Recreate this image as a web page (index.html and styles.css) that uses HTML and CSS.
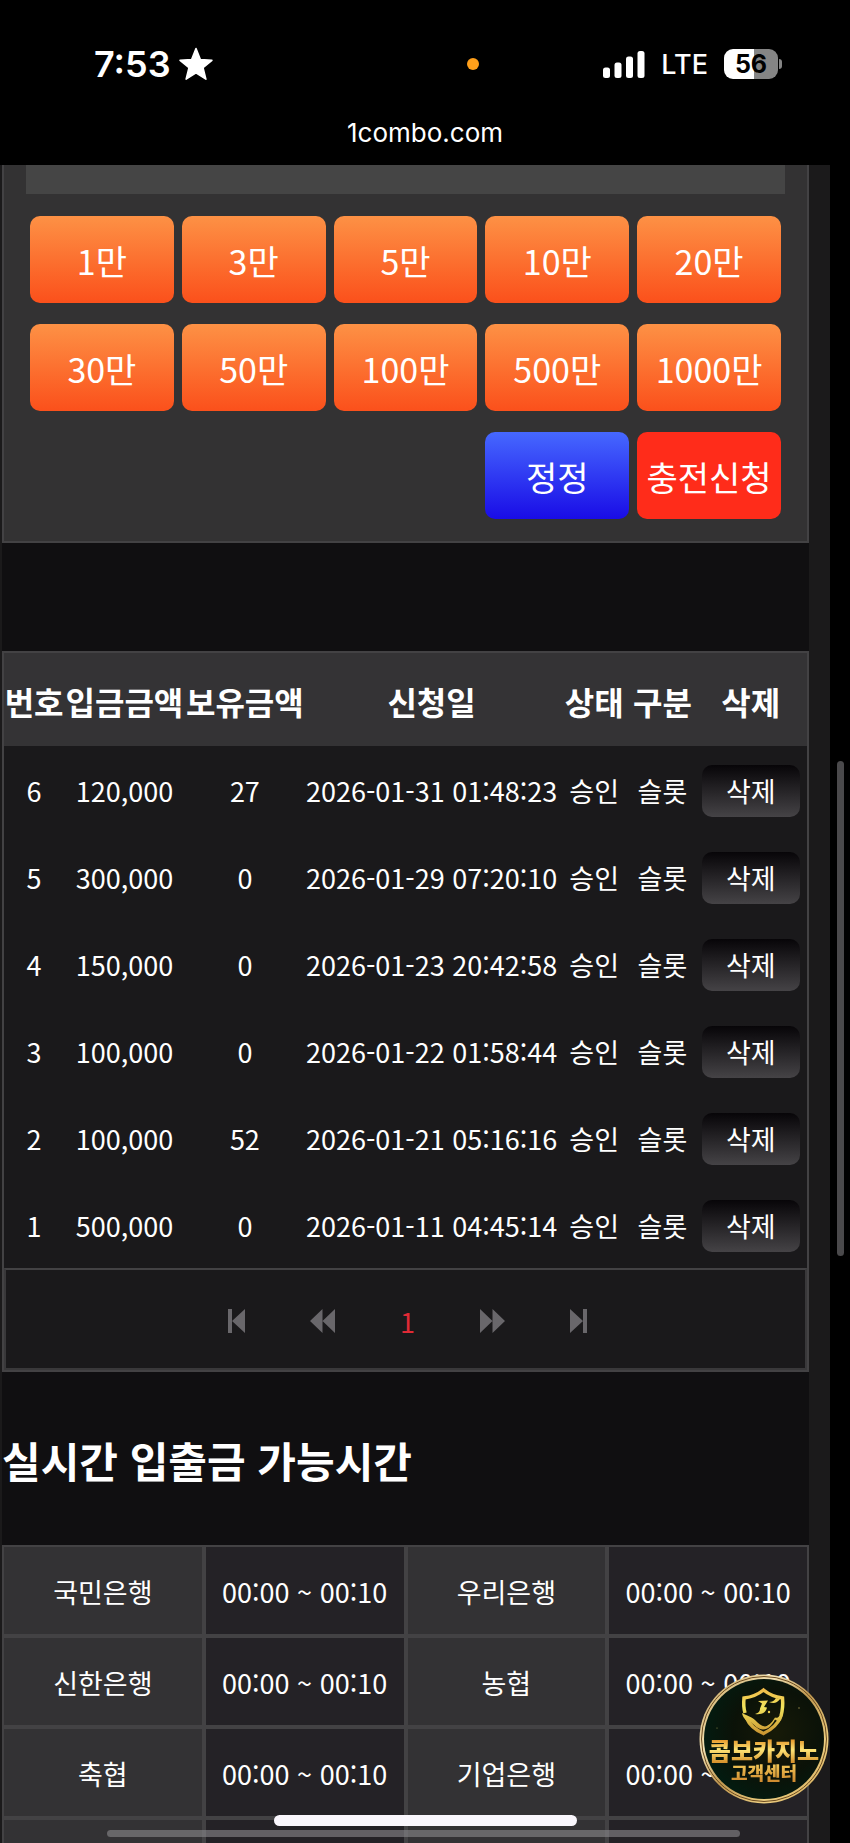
FILE: index.html
```html
<!DOCTYPE html>
<html lang="ko">
<head>
    <meta charset="UTF-8">
    <meta name="viewport" content="width=device-width, initial-scale=1.0">
    <title>1combo.com</title>
    <link rel="stylesheet" href="styles.css">
</head>
<body>
    <header class="phone-header">
        <div class="status-bar">
            <div class="status-time">
                <span>7:53</span>
                <svg class="star" viewBox="0 0 32 32" aria-hidden="true">
                    <path d="M16 1.5l4.1 10.2 10.9.8-8.4 7 2.7 10.8L16 24.4l-9.3 5.9 2.7-10.8-8.4-7 10.9-.8z" fill="#fff" stroke="#fff" stroke-width="1.5" stroke-linejoin="round"/>
                </svg>
            </div>
            <span class="mic-dot"></span>
            <div class="status-icons">
                <svg class="signal" viewBox="0 0 42 27" aria-hidden="true">
                    <rect x="0" y="16.500" width="7" height="10.500" rx="2.5" fill="#fff"/>
                    <rect x="11.5" y="11.500" width="7" height="15.500" rx="2.5" fill="#fff"/>
                    <rect x="23" y="5.500" width="7" height="21.500" rx="2.5" fill="#fff"/>
                    <rect x="34.5" y="0" width="7" height="27" rx="2.5" fill="#fff"/>
                </svg>
                <span class="network">LTE</span>
                <div class="battery"><span class="battery-level">56</span></div>
            </div>
        </div>
        <div class="address">1combo.com</div>
    </header>

    <main class="page">
        <div class="container">
            <form class="charge-panel">
                <input class="amount-input" type="text" aria-label="충전금액">
                <div class="amount-buttons">
                    <button type="button" class="btn">1만</button>
                    <button type="button" class="btn">3만</button>
                    <button type="button" class="btn">5만</button>
                    <button type="button" class="btn">10만</button>
                    <button type="button" class="btn">20만</button>
                    <button type="button" class="btn">30만</button>
                    <button type="button" class="btn">50만</button>
                    <button type="button" class="btn">100만</button>
                    <button type="button" class="btn">500만</button>
                    <button type="button" class="btn">1000만</button>
                    <button type="reset" class="btn btn-reset">정정</button>
                    <button type="submit" class="btn btn-submit">충전신청</button>
                </div>
            </form>

            <section class="history">
                <table class="history-table">
                    <colgroup>
                        <col class="col-no">
                        <col class="col-money">
                        <col class="col-money">
                        <col class="col-date">
                        <col class="col-state">
                        <col class="col-kind">
                        <col class="col-delete">
                    </colgroup>
                    <thead>
                        <tr><th>번호</th><th>입금금액</th><th>보유금액</th><th>신청일</th><th>상태</th><th>구분</th><th>삭제</th></tr>
                    </thead>
                    <tbody>
                        <tr><td>6</td><td>120,000</td><td>27</td><td>2026-01-31 01:48:23</td><td>승인</td><td>슬롯</td><td><button type="button" class="btn-delete">삭제</button></td></tr>
                        <tr><td>5</td><td>300,000</td><td>0</td><td>2026-01-29 07:20:10</td><td>승인</td><td>슬롯</td><td><button type="button" class="btn-delete">삭제</button></td></tr>
                        <tr><td>4</td><td>150,000</td><td>0</td><td>2026-01-23 20:42:58</td><td>승인</td><td>슬롯</td><td><button type="button" class="btn-delete">삭제</button></td></tr>
                        <tr><td>3</td><td>100,000</td><td>0</td><td>2026-01-22 01:58:44</td><td>승인</td><td>슬롯</td><td><button type="button" class="btn-delete">삭제</button></td></tr>
                        <tr><td>2</td><td>100,000</td><td>52</td><td>2026-01-21 05:16:16</td><td>승인</td><td>슬롯</td><td><button type="button" class="btn-delete">삭제</button></td></tr>
                        <tr><td>1</td><td>500,000</td><td>0</td><td>2026-01-11 04:45:14</td><td>승인</td><td>슬롯</td><td><button type="button" class="btn-delete">삭제</button></td></tr>
                    </tbody>
                </table>
                <nav class="pager">
                    <a href="#" aria-label="처음">
                        <svg width="17" height="24" viewBox="0 0 17 24"><path d="M0 0h4v24H0zM17 0v24L4 12z"/></svg>
                    </a>
                    <a href="#" aria-label="이전">
                        <svg width="25" height="24" viewBox="0 0 25 24"><path d="M12.5 0v24L0 12zM25 0v24L12.5 12z"/></svg>
                    </a>
                    <a href="#" class="current">1</a>
                    <a href="#" aria-label="다음">
                        <svg width="25" height="24" viewBox="0 0 25 24"><path d="M0 0v24l12.5-12zM12.5 0v24L25 12z"/></svg>
                    </a>
                    <a href="#" aria-label="마지막">
                        <svg width="17" height="24" viewBox="0 0 17 24"><path d="M0 0v24l13-12zM13 0h4v24h-4z"/></svg>
                    </a>
                </nav>
            </section>

            <h2 class="section-title">실시간 입출금 가능시간</h2>

            <table class="bank-table">
                <tbody>
                    <tr><th>국민은행</th><td>00:00 ~ 00:10</td><th>우리은행</th><td>00:00 ~ 00:10</td></tr>
                    <tr><th>신한은행</th><td>00:00 ~ 00:10</td><th>농협</th><td>00:00 ~ 00:10</td></tr>
                    <tr><th>축협</th><td>00:00 ~ 00:10</td><th>기업은행</th><td>00:00 ~ 00:10</td></tr>
                    <tr><th></th><td></td><th></th><td></td></tr>
                </tbody>
            </table>
        </div>
    </main>

    <!-- customer center badge -->
    <a href="#" class="support-badge" aria-label="콤보카지노 고객센터">
        <svg viewBox="0 0 130 130">
            <defs>
                <linearGradient id="ring" x1="0" y1="0" x2="1" y2="1">
                    <stop offset="0" stop-color="#8a6a36"/>
                    <stop offset=".15" stop-color="#d8bd80"/>
                    <stop offset=".3" stop-color="#f3e2b4"/>
                    <stop offset=".5" stop-color="#c09850"/>
                    <stop offset=".75" stop-color="#edcf82"/>
                    <stop offset="1" stop-color="#c99c4a"/>
                </linearGradient>
                <radialGradient id="face" cx=".6" cy=".45" r=".6">
                    <stop offset="0" stop-color="#171a08"/>
                    <stop offset=".6" stop-color="#0b1208"/>
                    <stop offset="1" stop-color="#031b10"/>
                </radialGradient>
                <linearGradient id="gold" gradientUnits="userSpaceOnUse" x1="0" y1="14" x2="0" y2="62">
                    <stop offset="0" stop-color="#f0b848"/>
                    <stop offset=".4" stop-color="#f1e35c"/>
                    <stop offset="1" stop-color="#c78f2e"/>
                </linearGradient>
                <linearGradient id="name-gold" gradientUnits="userSpaceOnUse" x1="0" y1="66" x2="0" y2="88">
                    <stop offset="0" stop-color="#e59a2e"/>
                    <stop offset=".45" stop-color="#fde476"/>
                    <stop offset="1" stop-color="#d8942e"/>
                </linearGradient>
                <linearGradient id="label-gold" gradientUnits="userSpaceOnUse" x1="0" y1="91" x2="0" y2="107">
                    <stop offset="0" stop-color="#f0c455"/>
                    <stop offset="1" stop-color="#d08c30"/>
                </linearGradient>
            </defs>
            <circle cx="65" cy="65" r="64.5" fill="url(#ring)"/>
            <circle cx="65" cy="65" r="62.5" fill="none" stroke="#6b4b20" stroke-width="1"/>
            <circle cx="65" cy="65" r="60" fill="url(#face)"/>
            <!-- shield -->
            <path d="M46 39c-1.500-5-1.500-10-1-15 8-1 14-3.500 19.500-8 5.500 4.500 12 7 19 8 .5 6 .2 12-1.500 18-3 8-9 13.500-17.500 17.500-8-3.500-14-8.500-17-15.500" fill="none" stroke="url(#gold)" stroke-width="3.500"/>
            <path d="M43 39c5 3 9 3.500 13 7 3 3 6 6 10 6.500 5-1 8-6 10-9 3 1 5-1 8-5l-2 8c-3 1-5 0-6-1-3 6-7 10-12 10-5 0-8-4-12-7-4-1-8-4-9-9.500z" fill="url(#gold)"/>
            <path d="M59 27l10-.5-4 6.500 3 .5c-1 5-5 7.500-12 6.500 4-1 5-3 5-5.500l2-5z" fill="url(#gold)"/>
            <path d="M70 28c3 0 5-1 7-4l4 1c-3 4-6 5-11 3z" fill="url(#gold)"/>
            <circle cx="70" cy="38" r="1.2" fill="#e9cf50"/>
            <circle cx="100" cy="34" r=".7" fill="#a99a55"/>
            <circle cx="18" cy="54" r=".6" fill="#8f8a50"/>
            <text class="badge-name" x="65" y="86" text-anchor="middle">콤보카지노</text>
            <text class="badge-label" x="65" y="106" text-anchor="middle">고객센터</text>
        </svg>
    </a>

    <span class="scrollbar-y"></span>
    <span class="scrollbar-x"></span>
    <span class="home-indicator"></span>
</body>
</html>
```
FILE: styles.css
```css
* {
    box-sizing: border-box;
}
body {
    font-family: "Noto Sans CJK KR", "Noto Sans", sans-serif;
    margin: 0;
    height: 100vh;
    overflow: hidden;
    display: flex;
    flex-direction: column;
    background-color: #000000;
    color: #ffffff;
}
button, input {
    font-family: inherit;
    border: 0;
    margin: 0;
    padding: 0;
    color: #ffffff;
}
a {
    color: inherit;
    text-decoration: none;
}

/* phone status bar */
.phone-header {
    flex: none;
    height: 165px;
    padding-top: 40px;
    font-family: Inter, "Liberation Sans", sans-serif;
}
.status-bar {
    display: grid;
    grid-template-columns: 5fr 12px 4fr;
    align-items: center;
    height: 48px;
    padding: 0 72px 0 94px;
}
.status-time {
    display: flex;
    align-items: center;
    gap: 8px;
    font-size: 36px;
    font-weight: 600;
}
.star {
    width: 34px;
    height: 34px;
}
.mic-dot {
    width: 12px;
    height: 12px;
    border-radius: 50%;
    background-color: #ff9f1a;
}
.status-icons {
    display: flex;
    align-items: center;
    justify-content: flex-end;
    gap: 16px;
}
.signal {
    width: 42px;
    height: 27px;
}
.network {
    font-size: 27px;
    font-weight: 500;
}
.battery {
    position: relative;
    width: 54px;
    height: 30px;
    border-radius: 9px;
    background: linear-gradient(90deg, #ffffff 56%, #858585 56%);
    color: #000000;
    font-size: 25px;
    font-weight: 700;
    line-height: 30px;
    text-align: center;
}
.battery::after {
    content: "";
    position: absolute;
    right: -4px;
    top: 10px;
    width: 3px;
    height: 10px;
    border-radius: 0 3px 3px 0;
    background-color: #858585;
}
.address {
    margin-top: 29px;
    font-size: 26px;
    line-height: 32px;
    text-align: center;
}

/* page */
.page {
    flex: 1;
    min-height: 0;
    overflow: hidden;
    margin-right: 20px;
    padding: 0 21px 0 2px;
    background-color: #1b1a1b;
}
.container {
    background-color: #100f11;
}
.charge-panel {
    padding: 0 22px 22px;
    border: 2px solid #434244;
    border-top: 0;
    background-color: #333233;
}
.amount-input {
    display: block;
    width: 100%;
    height: 29px;
    background-color: #454545;
}
.amount-buttons {
    display: grid;
    grid-template-columns: repeat(5, minmax(0, 1fr));
    gap: 21px 8px;
    padding: 22px 4px 0;
}
.btn {
    height: 87px;
    padding-top: 2px;
    border-radius: 10px;
    background: linear-gradient(#fd9145, #fb501b);
    font-size: 34px;
    white-space: nowrap;
}
.btn-reset {
    grid-column: 4;
    background: linear-gradient(#4668ff, #190ce6);
}
.btn-submit {
    background: #ff2c1a;
}

/* deposit history */
.history {
    margin-top: 108px;
    border: 2px solid #434244;
    background-color: #1a191b;
}
.history-table {
    width: 100%;
    table-layout: fixed;
    border-collapse: collapse;
    text-align: center;
    white-space: nowrap;
}
.col-no { width: 7.5%; }
.col-money { width: 15%; }
.col-date { width: 31.5%; }
.col-state { width: 9%; }
.col-kind { width: 8%; }
.col-delete { width: 14%; }
.history-table th {
    height: 93px;
    padding: 2px 0 0;
    background-color: #343335;
    font-size: 32px;
    font-weight: 700;
}
.history-table td {
    height: 87px;
    padding: 2px 0 0;
    font-size: 27px;
}
.btn-delete {
    display: block;
    width: 98px;
    height: 52px;
    margin: 0 auto;
    border-radius: 10px;
    background: linear-gradient(#070508, #454346);
    font-size: 27px;
}
.pager {
    display: flex;
    align-items: center;
    justify-content: center;
    gap: 65px;
    height: 102px;
    padding: 4px 0 0 4px;
    border: 2px solid #39383a;
    border-top-color: #434244;
    font-size: 27px;
}
.pager svg {
    display: block;
    fill: #69676b;
}
.pager .current {
    color: #e02a36;
}

/* bank hours */
.section-title {
    margin: 58px 0 55px;
    font-size: 42px;
    font-weight: 700;
    line-height: 60px;
}
.bank-table {
    width: 100%;
    table-layout: fixed;
    border-spacing: 0;
    text-align: center;
    white-space: nowrap;
    font-size: 27px;
}
.bank-table th,
.bank-table td {
    height: 91px;
    padding: 2px 0 0;
    border: 2px solid #434244;
    font-weight: 400;
}
.bank-table th {
    background-color: #333234;
}
.bank-table td {
    background-color: #242226;
}

/* overlays */
.support-badge {
    position: fixed;
    right: 21px;
    bottom: 39px;
    width: 130px;
    height: 130px;
}
.support-badge svg {
    display: block;
}
.badge-name,
.badge-label {
    font-weight: 900;
}
.badge-name {
    fill: url(#name-gold);
    font-size: 24px;
}
.badge-label {
    fill: url(#label-gold);
    font-size: 18px;
}
.scrollbar-y {
    position: fixed;
    right: 6px;
    top: 761px;
    width: 7px;
    height: 495px;
    border-radius: 4px;
    background-color: #4a494b;
}
.scrollbar-x {
    position: fixed;
    left: 107px;
    right: 110px;
    bottom: 6px;
    height: 7px;
    border-radius: 4px;
    background-color: rgba(140, 138, 142, 0.6);
}
.home-indicator {
    position: fixed;
    left: 274px;
    right: 273px;
    bottom: 17px;
    height: 11px;
    border-radius: 6px;
    background-color: #faf7fd;
}
```
